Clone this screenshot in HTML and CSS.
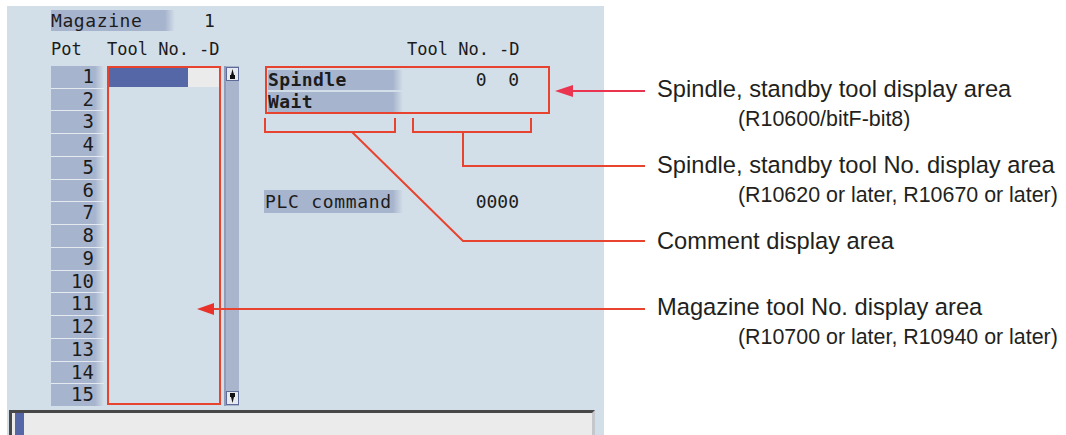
FILE: index.html
```html
<!DOCTYPE html>
<html lang="en">
<head>
    <meta charset="UTF-8">
    <meta name="viewport" content="width=device-width, initial-scale=1.0">
    <title>Magazine tool display</title>
    <link rel="stylesheet" href="styles.css">
</head>
<body>
    <div class="screen">
        <div class="screen-body">
            <div class="mag-row">
                <span class="label mag-label">Magazine</span>
                <span class="mag-no">1</span>
            </div>
            <div class="panels">
                <div class="left">
                    <div class="col-head">
                        <span class="h-pot">Pot</span><span>Tool No. -D</span>
                    </div>
                    <div class="list">
                        <div class="pots">
                            <div class="pot">1</div>
                            <div class="pot">2</div>
                            <div class="pot">3</div>
                            <div class="pot">4</div>
                            <div class="pot">5</div>
                            <div class="pot">6</div>
                            <div class="pot">7</div>
                            <div class="pot">8</div>
                            <div class="pot">9</div>
                            <div class="pot">10</div>
                            <div class="pot">11</div>
                            <div class="pot">12</div>
                            <div class="pot">13</div>
                            <div class="pot">14</div>
                            <div class="pot">15</div>
                        </div>
                        <div class="tools">
                            <div class="tool-row">
                                <span class="tool-no"></span>
                                <span class="tool-d"></span>
                            </div>
                        </div>
                        <div class="scroll">
                            <span class="scroll-btn">
                                <svg width="11" height="12" viewBox="0 0 11 12"><path d="M5.5 1 L4 7 H3 V11 H8 V7 H7 Z" fill="#111"/></svg>
                            </span>
                            <span class="scroll-btn">
                                <svg width="11" height="12" viewBox="0 0 11 12"><path d="M5.5 11 L4 5 H3 V1 H8 V5 H7 Z" fill="#111"/></svg>
                            </span>
                        </div>
                    </div>
                </div>
                <div class="right">
                    <div class="col-head right-head">Tool No. -D</div>
                    <div class="st-rows">
                        <div class="st-row">
                            <span class="label st-label">Spindle</span>
                            <span class="val">0  0</span>
                        </div>
                        <div class="st-row">
                            <span class="label st-label">Wait</span>
                            <span class="val"></span>
                        </div>
                    </div>
                    <div class="plc-row">
                        <span class="label plc-label">PLC command</span>
                        <span class="val">0000</span>
                    </div>
                </div>
            </div>
        </div>
        <div class="input-bar"><span class="cursor"></span></div>
    </div>

    <div class="notes">
        <div class="note">
            <div class="note-main">Spindle, standby tool display area</div>
            <div class="note-sub">(R10600/bitF-bit8)</div>
        </div>
        <div class="note">
            <div class="note-main">Spindle, standby tool No. display area</div>
            <div class="note-sub">(R10620 or later, R10670 or later)</div>
        </div>
        <div class="note note-single">
            <div class="note-main">Comment display area</div>
        </div>
        <div class="note">
            <div class="note-main">Magazine tool No. display area</div>
            <div class="note-sub">(R10700 or later, R10940 or later)</div>
        </div>
    </div>

    <!-- annotation marks drawn over the screen -->
    <svg class="marks" width="1066" height="435" viewBox="0 0 1066 435">
        <g fill="none" stroke="#e8432f" stroke-width="2">
            <rect x="108" y="67" width="112" height="337"/>
            <rect x="266" y="67" width="283" height="46"/>
            <path d="M265 118 V132 H395 V118"/>
            <path d="M413 118 V132 H531 V118"/>
            <path d="M352 132 L463 241 H645"/>
            <path d="M463 132 V166 H645"/>
            <path d="M213 309 H645"/>
        </g>
        <polygon points="197,309 214,303 214,315" fill="#e8322a"/>
        <path d="M571 91 H645" stroke="#ea3450" stroke-width="2"/>
        <polygon points="555,91 573,85 573,97" fill="#ea3450"/>
    </svg>
</body>
</html>
```

FILE: styles.css
```css
body {
    margin: 0;
    width: 1066px;
    height: 435px;
    overflow: hidden;
    position: relative;
    display: flex;
    background-color: white;
    font-family: "DejaVu Sans Mono", "Liberation Mono", monospace;
    color: #1c1c1c;
}
.screen {
    margin: 6px 0 0 7px;
    width: 597px;
    height: 429px;
    flex-shrink: 0;
    background-color: #d3dfe8;
    display: flex;
    flex-direction: column;
}
.screen-body {
    padding: 4px 0 0 44px;
}
.label {
    background: linear-gradient(to right, #a7b4ce calc(100% - 10px), #d3dfe8);
    font-size: 18px;
    letter-spacing: 0.6px;
    white-space: nowrap;
}
.mag-row {
    display: flex;
    height: 21px;
    line-height: 21px;
}
.mag-label {
    width: 124px;
}
.mag-no {
    margin-left: 29px;
    font-size: 18px;
}
.panels {
    display: flex;
}
.col-head {
    height: 35px;
    box-sizing: border-box;
    padding-top: 7px;
    line-height: 22px;
    font-size: 17px;
    white-space: nowrap;
}
.h-pot {
    display: inline-block;
    width: 56px;
}
.list {
    display: flex;
    height: 340px;
}
.pots {
    width: 53px;
    display: grid;
    grid-template-rows: repeat(15, 1fr);
    row-gap: 1px;
    background-color: #e3e9ef;
}
.pot {
    background: linear-gradient(to right, #a7b4ce calc(100% - 9px), #d3dfe8);
    text-align: right;
    padding-right: 10px;
    font-size: 19px;
    line-height: 21px;
}
.tools {
    width: 114px;
    margin-left: 3px;
    padding: 2px;
    box-sizing: border-box;
}
.tool-row {
    display: flex;
    height: 19px;
}
.tool-no {
    width: 79px;
    background-color: #5567a7;
}
.tool-d {
    flex: 1;
    background-color: #ebebeb;
}
.scroll {
    width: 15px;
    margin-left: 3px;
    box-sizing: border-box;
    background-color: #a9b5cd;
    border-left: 2px solid #8f9bb8;
    display: flex;
    flex-direction: column;
    justify-content: space-between;
    padding: 1px 0;
}
.scroll-btn {
    width: 13px;
    height: 14px;
    box-sizing: border-box;
    background-color: #e6e9ef;
    border: 1px solid #5d6b98;
    display: flex;
    align-items: center;
    justify-content: center;
}
.right {
    margin-left: 25px;
}
.right-head {
    padding-left: 143px;
}
.st-rows {
    margin-top: 4px;
    padding-left: 4px;
    display: flex;
    flex-direction: column;
    gap: 2px;
}
.st-row {
    display: flex;
    height: 20px;
    line-height: 20px;
}
.st-label {
    width: 135px;
    font-weight: bold;
    letter-spacing: 0.4px;
}
.val {
    width: 116px;
    text-align: right;
    font-size: 18px;
    white-space: pre;
    font-variant-numeric: slashed-zero;
}
.plc-row {
    display: flex;
    margin-top: 78px;
    height: 23px;
    line-height: 23px;
}
.plc-label {
    width: 138px;
    padding-left: 1px;
    letter-spacing: 0.7px;
}
.input-bar {
    margin: auto 0 0 2px;
    width: 586px;
    height: 25px;
    box-sizing: border-box;
    background-color: #ebebeb;
    border-top: 3px solid #474747;
    border-left: 3px solid #474747;
    border-right: 3px solid #c4c8cc;
    padding-left: 3px;
}
.cursor {
    display: block;
    width: 9px;
    height: 100%;
    background-color: #5567a7;
}
.notes {
    margin-left: 53px;
    padding-top: 75px;
    font-family: "Liberation Sans", Arial, sans-serif;
    color: #231f20;
    white-space: nowrap;
}
.note {
    margin-bottom: 19px;
}
.note-single {
    margin-bottom: 38px;
}
.note-main {
    font-size: 23.7px;
    line-height: 28px;
}
.note-sub {
    margin-top: 3px;
    padding-left: 81px;
    font-size: 21.4px;
    line-height: 26px;
}
.marks {
    position: absolute;
    top: 0;
    left: 0;
    pointer-events: none;
}
```
